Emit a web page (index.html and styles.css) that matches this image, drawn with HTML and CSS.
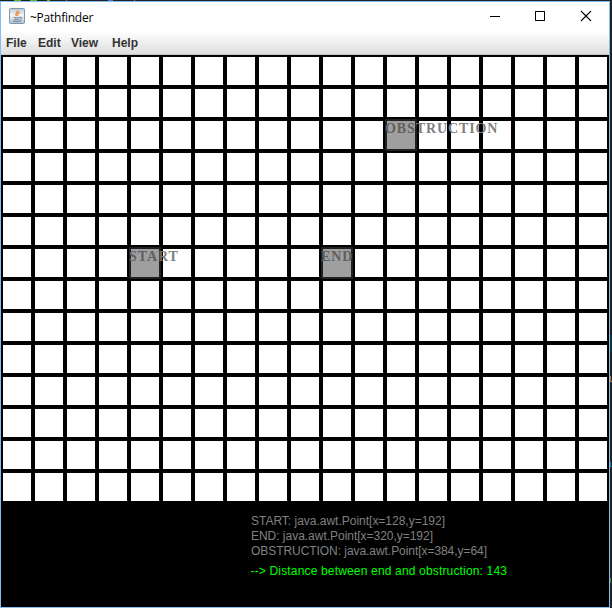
FILE: index.html
```html
<!DOCTYPE html>
<html lang="en">
<head>
<meta charset="utf-8">
<title>~Pathfinder</title>
<link rel="stylesheet" href="styles.css">
</head>
<body>
<div class="desktop">
<div class="window">
  <header class="titlebar">
    <svg class="app-icon" width="16" height="16" viewBox="0 0 16 16">
      <defs><linearGradient id="g" x1="0" y1="0" x2="0" y2="1"><stop offset="0" stop-color="#b9c9d6"/><stop offset=".45" stop-color="#f5f5f3"/><stop offset="1" stop-color="#aebfcd"/></linearGradient></defs>
      <rect x=".5" y=".5" width="15" height="15" rx="1" fill="url(#g)" stroke="#7c98ae"/>
      <path d="M8.8 2.2C9.4 4 5 5 7.6 8.2M10.8 4.4C8.5 5 8.2 6 9.1 7.8" fill="none" stroke="#e98332" stroke-width="1.2"/>
      <path d="M4.5 9.3c1.5.8 4 .8 6 0M5.3 11.2c1.2.5 3 .5 4.4 0M3.8 12.8c2.5 1 6.500 .8 8.400-.3M10.800 9.300c2.400-.8 2.400 1.300 0 2" fill="none" stroke="#527592" stroke-width=".9"/>
    </svg>
    <span class="title">~Pathfinder</span>
    <div class="controls">
      <svg width="12" height="12" viewBox="0 0 12 12"><path d="M1 6.5h10" stroke="#000"/></svg>
      <svg width="12" height="12" viewBox="0 0 12 12"><rect x="1.5" y="1.5" width="9" height="9" fill="none" stroke="#000"/></svg>
      <svg class="close" width="12" height="12" viewBox="0 0 12 12"><path d="M1 1l10 10M11 1L1 11" stroke="#000" stroke-width="1.1"/></svg>
    </div>
  </header>
  <nav class="menu"><span class="file">File</span><span class="edit">Edit</span><span class="view">View</span><span class="help">Help</span></nav>
  <main class="canvas">
    <div class="board">
      <div class="node start"><span>START</span></div>
      <div class="node end"><span>END</span></div>
      <div class="node obstruction"><span>OBSTRUCTION</span></div>
    </div>
    <div class="log">
      <svg width="300" height="80">
        <g class="muted">
          <text x="10" y="22" textLength="194">START: java.awt.Point[x=128,y=192]</text>
          <text x="10" y="37" textLength="182">END: java.awt.Point[x=320,y=192]</text>
          <text x="10" y="52" textLength="236">OBSTRUCTION: java.awt.Point[x=384,y=64]</text>
        </g>
        <text class="distance" x="9.5" y="72" textLength="256.5">--&gt; Distance between end and obstruction: 143</text>
      </svg>
    </div>
  </main>
</div>
</div>
</body>
</html>
```

FILE: styles.css
```css
* { box-sizing: border-box; }
body { margin: 0; }
.desktop {
  width: 612px;
  height: 608px;
  padding: 1px 2px 0 0;
  overflow: hidden;
  background:
    linear-gradient(#68b52c, #68b52c) 14px 0 / 7px 1px no-repeat,
    linear-gradient(#68b52c, #68b52c) 30px 0 / 7px 1px no-repeat,
    linear-gradient(#68b52c, #68b52c) 47px 0 / 3px 1px no-repeat,
    linear-gradient(#a87855, #a87855) 66px 0 / 1px 1px no-repeat,
    linear-gradient(#4c78d8, #4c78d8) 108px 0 / 5px 1px no-repeat,
    linear-gradient(#a87855, #a87855) 134px 0 / 1px 1px no-repeat,
    linear-gradient(#123641, #123641) 610px 335px / 2px 17px no-repeat,
    linear-gradient(#b57635, #b57635) 610px 376px / 1px 6px no-repeat,
    linear-gradient(#b57635, #b57635) 610px 381px / 2px 1px no-repeat,
    linear-gradient(#16818a, #16818a) 610px 462px / 1px 5px no-repeat,
    linear-gradient(#16818a, #16818a) 610px 466px / 2px 1px no-repeat,
    linear-gradient(#477e1d, #477e1d) 610px 578px / 1px 5px no-repeat,
    #222226;
}
.window {
  width: 610px;
  height: 607px;
  border: 1px solid #83bdf0;
  background: #fff;
}
.titlebar {
  display: flex;
  align-items: flex-start;
  height: 29px;
  padding: 6px 17px 0 8px;
}
.title {
  margin-left: 5px;
  padding-top: 1px;
  font: 12px/17px "Open Sans", sans-serif;
  letter-spacing: -.25px;
  color: #000;
}
.controls { display: flex; gap: 33px; margin: 2px 1px 0 auto; }
.controls svg { display: block; }
.controls .close { margin-right: -1px; margin-left: 1px; }
.menu {
  display: flex;
  height: 24px;
  padding-left: 5px;
  background: linear-gradient(#fff, #dedede);
  border-bottom: 1px solid #c8c8c8;
  font: bold 12px/25px "Liberation Sans", Arial, sans-serif;
  color: #333;
}
.file { width: 32px; }
.edit { width: 33px; }
.view { width: 41px; }
.canvas { height: 552px; background: #000; }
.board {
  position: relative;
  width: 608px;
  height: 448px;
  background:
    conic-gradient(from 90deg at 4px 4px, #fff 90deg, #000 0) -2px -2px / 32px 32px;
}
.node {
  position: absolute;
  width: 32px;
  height: 32px;
}
.node::after {
  content: "";
  position: absolute;
  inset: 0;
  background: rgba(64, 64, 64, .5);
}
.node span {
  display: block;
  padding-top: 2px;
  font: bold 14px/16px "Liberation Serif", "Times New Roman", serif;
  letter-spacing: .9px;
  white-space: nowrap;
  color: #808080;
}
.start { left: 128px; top: 192px; }
.end { left: 320px; top: 192px; }
.obstruction { left: 384px; top: 64px; }
.log { padding: 0 0 0 240px; }
.log svg { display: block; font: 12px "Liberation Sans", Arial, sans-serif; }
.muted { fill: #808080; }
.distance { fill: #0f0; }
```
